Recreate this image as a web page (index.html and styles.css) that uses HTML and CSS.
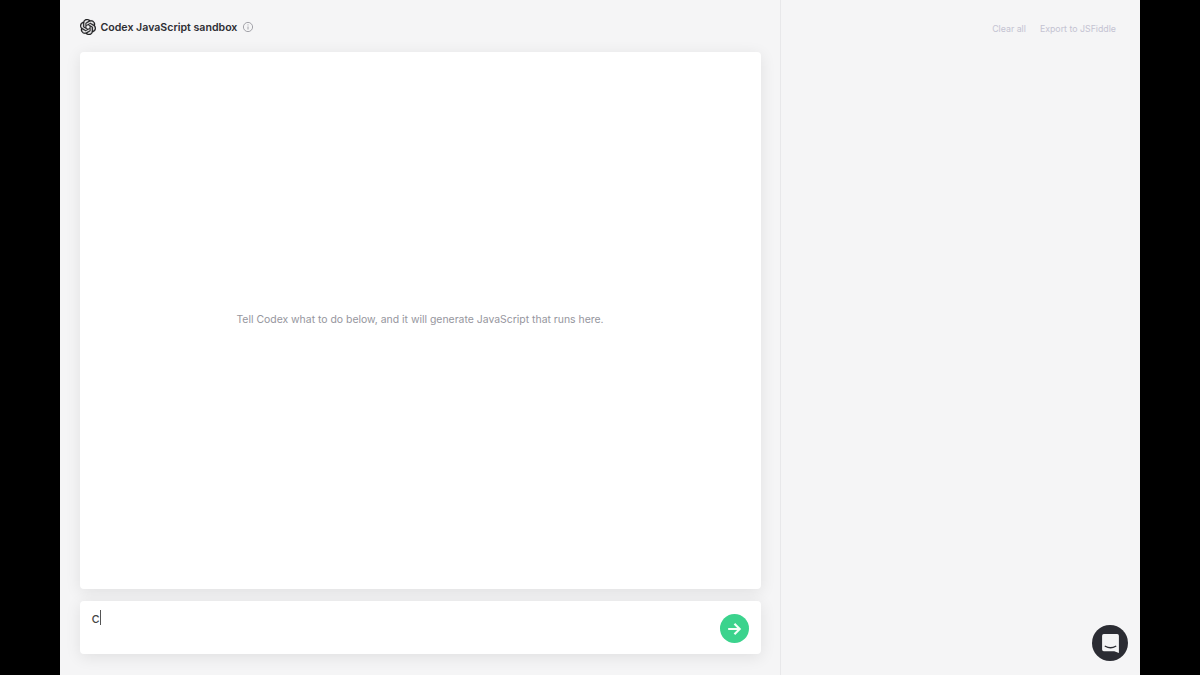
FILE: index.html
```html
<!DOCTYPE html>
<html>
  <head>
    <title>Codex JavaScript sandbox</title>
    <link rel="stylesheet" href="styles.css">
  </head>
  <body>
    <div class="app">
      <div class="left">
        <div class="head">
          <svg class="logo" viewBox="0 0 24 24"><path d="M22.2819 9.8211a5.9847 5.9847 0 0 0-.5157-4.9108 6.0462 6.0462 0 0 0-6.5098-2.9A6.0651 6.0651 0 0 0 4.9807 4.1818a5.9847 5.9847 0 0 0-3.9977 2.9 6.0462 6.0462 0 0 0 .7427 7.0966 5.98 5.98 0 0 0 .511 4.9107 6.051 6.051 0 0 0 6.5146 2.9001A5.9847 5.9847 0 0 0 13.2599 24a6.0557 6.0557 0 0 0 5.7718-4.2058 5.9894 5.9894 0 0 0 3.9977-2.9001 6.0557 6.0557 0 0 0-.7475-7.0729zm-9.022 12.6081a4.4755 4.4755 0 0 1-2.8764-1.0408l.1419-.0804 4.7783-2.7582a.7948.7948 0 0 0 .3927-.6813v-6.7369l2.02 1.1686a.071.071 0 0 1 .038.052v5.5826a4.504 4.504 0 0 1-4.4945 4.4944zm-9.6607-4.1254a4.4708 4.4708 0 0 1-.5346-3.0137l.142.0852 4.783 2.7582a.7712.7712 0 0 0 .7806 0l5.8428-3.3685v2.3324a.0804.0804 0 0 1-.0332.0615L9.74 19.9502a4.4992 4.4992 0 0 1-6.1408-1.6464zM2.3408 7.8956a4.485 4.485 0 0 1 2.3655-1.9728V11.6a.7664.7664 0 0 0 .3879.6765l5.8144 3.3543-2.0201 1.1685a.0757.0757 0 0 1-.071 0l-4.8303-2.7865A4.504 4.504 0 0 1 2.3408 7.872zm16.5963 3.8558L13.1038 8.364 15.1192 7.2a.0757.0757 0 0 1 .071 0l4.8303 2.7913a4.4944 4.4944 0 0 1-.6765 8.1042v-5.6772a.79.79 0 0 0-.407-.667zm2.0107-3.0231l-.142-.0852-4.7735-2.7818a.7759.7759 0 0 0-.7854 0L9.409 9.2297V6.8974a.0662.0662 0 0 1 .0284-.0615l4.8303-2.7866a4.4992 4.4992 0 0 1 6.6802 4.66zM8.3065 12.863l-2.02-1.1638a.0804.0804 0 0 1-.038-.0567V6.0742a4.4992 4.4992 0 0 1 7.3757-3.4537l-.142.0805L8.704 5.459a.7948.7948 0 0 0-.3927.6813zm1.0976-2.3654l2.602-1.4998 2.6069 1.4998v2.9994l-2.5974 1.4997-2.6067-1.4997Z"/></svg>
          <span class="title">Codex JavaScript sandbox</span>
          <svg class="info" viewBox="0 0 12 12"><circle cx="6" cy="6" r="4.6"/><path d="M6 5.5v3M6 3.4v1"/></svg>
        </div>
        <div class="card output">
          <p class="hint">Tell Codex what to do below, and it will generate JavaScript that runs here.</p>
        </div>
        <div class="card prompt">
          <div class="typed"><span>c</span><i class="caret"></i></div>
          <div class="send">
            <svg viewBox="0 0 20 20"><path d="M3.5 10h12.5M10.5 4.2l5.8 5.8-5.8 5.8"/></svg>
          </div>
        </div>
      </div>
      <div class="right">
        <div class="links">
          <span>Clear all</span>
          <span>Export to JSFiddle</span>
        </div>
      </div>
      <div class="chat">
        <svg viewBox="0 0 20 20"><path class="bubble" d="M3.6 1h12.8a1.6 1.6 0 0 1 1.6 1.6V19l-4.4-1.7H3.6A1.6 1.6 0 0 1 2 15.7V2.6A1.6 1.6 0 0 1 3.6 1z"/><path class="smile" d="M5 12.6c3.1 1.8 6.9 1.8 10 0"/></svg>
      </div>
    </div>
  </body>
</html>
```

FILE: styles.css
```css
html, body { margin: 0; height: 100%; background: #000; overflow: hidden; }
body { font-family: Inter, "Liberation Sans", sans-serif; }

.app { position: relative; display: flex; width: 1080px; height: 675px; margin: 0 60px; background: #f5f5f6; }

.left { display: flex; flex-direction: column; box-sizing: border-box; width: 721px; padding: 0 19.5px 21px 19.5px; border-right: 1px solid #e8e8ea; }
.head { display: flex; align-items: center; height: 52px; padding-top: 2px; box-sizing: border-box; }
.logo { width: 16px; height: 16px; margin-right: 5px; fill: #202123; stroke: #202123; stroke-width: 0.5; }
.title { font-size: 10.6px; font-weight: 600; color: #2d2d33; }
.info { width: 12px; height: 12px; margin-left: 5px; fill: none; stroke: #9a9aa0; stroke-width: 0.9; }

.card { background: #fff; border-radius: 4px; box-shadow: 0 3px 16px rgba(0, 0, 0, 0.09); }
.output { display: flex; align-items: center; justify-content: center; height: 537px; padding-bottom: 2px; box-sizing: border-box; }
.hint { margin: 0; font-size: 10.43px; color: #96969e; }

.prompt { display: flex; justify-content: space-between; box-sizing: border-box; height: 53px; margin-top: 12px; padding: 9px 12px 0 12px; }
.typed { display: flex; align-items: center; height: 14px; font-size: 14.5px; color: #444; }
.caret { width: 1px; height: 15px; background: #555; }
.send { display: flex; align-items: center; justify-content: center; width: 29px; height: 29px; margin-top: 4px; border-radius: 50%; background: #3bd38d; }
.send svg { width: 18px; height: 18px; fill: none; stroke: #f2fff8; stroke-width: 2.4; }

.right { flex: 1; }
.links { display: flex; justify-content: flex-end; gap: 14px; padding: 23px 24px 0 0; font-size: 8.8px; color: #c4c3d2; }

.chat { position: absolute; right: 12px; bottom: 14px; display: flex; align-items: center; justify-content: center; width: 36px; height: 36px; border-radius: 50%; background: #2b2c33; }
.chat svg { width: 21px; height: 21px; }
.bubble { fill: #f4f4f5; }
.smile { fill: none; stroke: #2b2c33; stroke-width: 1.3; stroke-linecap: round; }
```
